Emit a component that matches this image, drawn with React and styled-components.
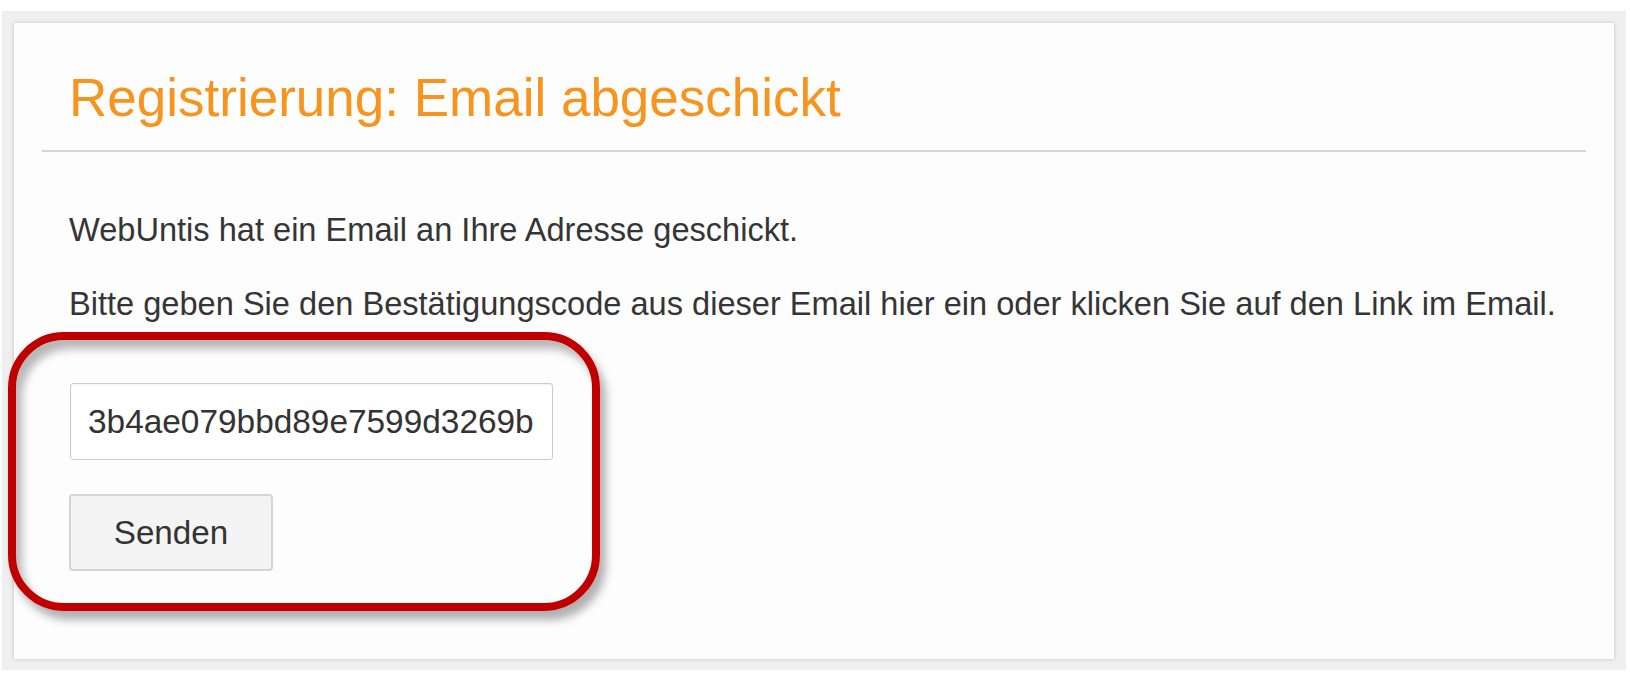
import React from "react";
import styled, { createGlobalStyle } from "styled-components";

const GlobalStyle = createGlobalStyle`
body {
  margin: 0;
  background: #ffffff;
  font-family: "Liberation Sans", Arial, sans-serif;
}
`
const Frame = styled.div`
  box-sizing: border-box;
  width: 1624px;
  margin: 11px 0 0 2px;
  padding: 12px 12px 11px 12px;
  background: #efefef;
`
const Panel = styled.div`
  box-sizing: border-box;
  position: relative;
  height: 636px;
  padding: 0 28px;
  background: #fdfdfd;
  box-shadow: 0 0 4px rgba(0, 0, 0, 0.2);
`
const Header = styled.div`
  padding: 45px 27px 22px;
  border-bottom: 2px solid #d6d6d6;
`
const Title = styled.h1`
  margin: 0;
  font-size: 53px;
  line-height: 60px;
  font-weight: normal;
  color: #f7941d;
`
const Body = styled.div`
  padding: 58px 27px 0;
`
const Text = styled.p`
  margin: 0 0 34px;
  font-size: 32.6px;
  line-height: 40px;
  color: #353535;
`
const Form = styled.div`
  position: relative;
  display: flex;
  flex-direction: column;
  align-items: flex-start;
  gap: 34px;
  margin-top: 59px;
`
const CodeInput = styled.input`
  box-sizing: border-box;
  width: 483px;
  height: 77px;
  padding: 0 0 0 17px;
  margin-left: 1px;
  border: 1px solid #cccccc;
  border-radius: 3px;
  box-shadow: inset 0 1px 2px rgba(0, 0, 0, 0.06);
  background: #ffffff;
  font-family: "Liberation Sans", Arial, sans-serif;
  font-size: 33.4px;
  color: #333333;
  outline: none;
`
const Button = styled.button`
  box-sizing: border-box;
  width: 204px;
  height: 77px;
  border: 2px solid #d4d4d4;
  border-radius: 4px;
  background: #f4f4f4;
  font-family: "Liberation Sans", Arial, sans-serif;
  font-size: 33.2px;
  color: #333333;
  cursor: pointer;
`
const Highlight = styled.div`
  position: absolute;
  left: -61px;
  top: -51px;
  width: 592px;
  height: 279px;
  box-sizing: border-box;
  border: 8px solid #c00000;
  border-radius: 56px;
  box-shadow: 6px 9px 8px rgba(0, 0, 0, 0.3), inset 6px 9px 8px rgba(0, 0, 0, 0.28);
  pointer-events: none;
`

export default function App() {
  return (
    <>
      <GlobalStyle />
      <Frame>
        <Panel>
          <Header>
            <Title>Registrierung: Email abgeschickt</Title>
          </Header>
          <Body>
            <Text>WebUntis hat ein Email an Ihre Adresse geschickt.</Text>
            <Text>Bitte geben Sie den Bestätigungscode aus dieser Email hier ein oder klicken Sie auf den Link im Email.</Text>
            <Form>
              <CodeInput defaultValue="3b4ae079bbd89e7599d3269b" />
              <Button>Senden</Button>
              <Highlight />
            </Form>
          </Body>
        </Panel>
      </Frame>
    </>
  );
}
